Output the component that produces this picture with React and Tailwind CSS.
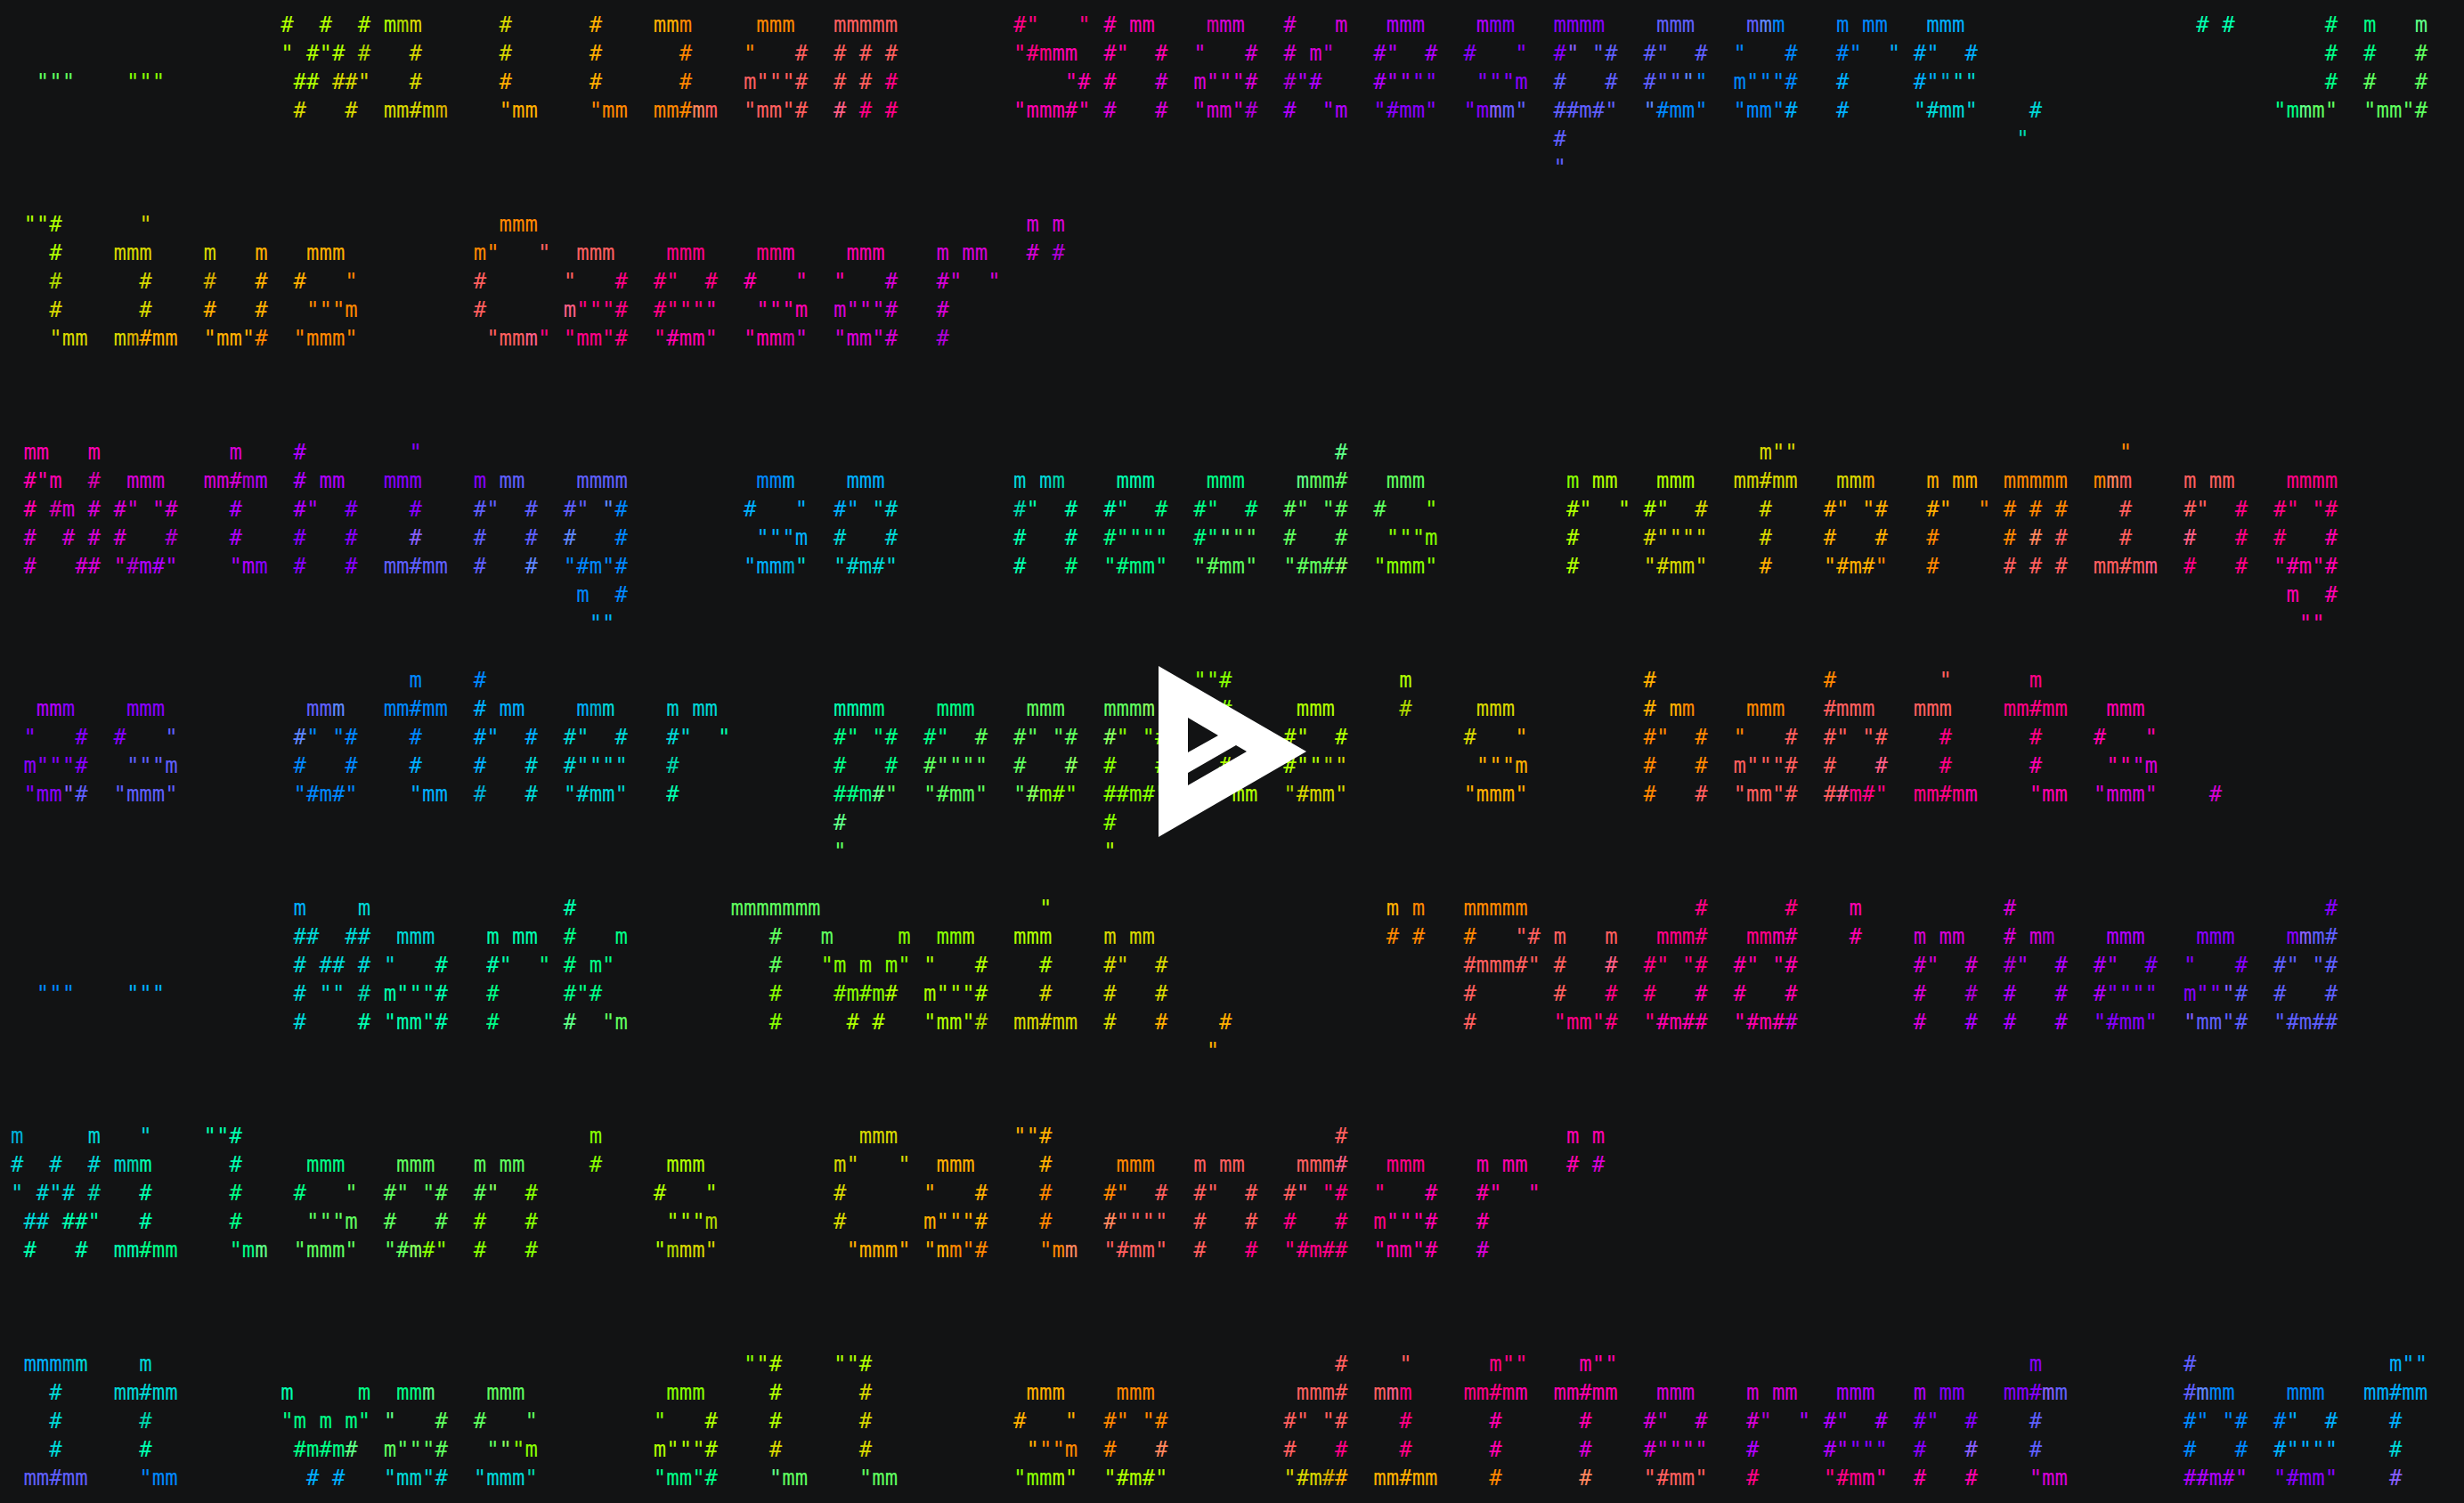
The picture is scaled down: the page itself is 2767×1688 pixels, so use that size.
const LINES = {
  0: `22:# 25:# 28:# 30:mmm 39:# 46:# 51:mmm 59:mmm 65:mmmmm 79:#" 84:" 86:# 88:mm 94:mmm 100:# 104:m 108:mmm 115:mmm 121:mmmm 129:mmm 136:mmm 143:m 145:mm 150:mmm 171:# 173:# 181:# 184:m 188:m`,
  1: `22:" 24:#"# 28:# 32:# 39:# 46:# 53:# 58:" 62:# 65:# 67:# 69:# 79:"#mmm 86:#" 90:# 93:" 97:# 100:# 102:m" 107:#" 111:# 114:# 118:" 121:#" 124:"# 128:#" 132:# 135:" 139:# 143:#" 147:" 149:#" 153:# 181:# 184:# 188:#`,
  2: `3:""" 10:""" 23:## 26:##" 32:# 39:# 46:# 53:# 58:m"""# 65:# 67:# 69:# 83:"# 86:# 90:# 93:m"""# 100:#"# 107:#"""" 115:"""m 121:# 125:# 128:#"""" 135:m"""# 143:# 149:#"""" 181:# 184:# 188:#`,
  3: `23:# 27:# 30:mm#mm 39:"mm 46:"mm 51:mm#mm 58:"mm"# 65:# 67:# 69:# 79:"mmm#" 86:# 90:# 93:"mm"# 100:# 103:"m 107:"#mm" 114:"mmm" 121:##m#" 128:"#mm" 135:"mm"# 143:# 149:"#mm" 158:# 177:"mmm" 184:"mm"#`,
  4: `121:# 157:"`,
  5: `121:"`,
  7: `2:""# 11:" 39:mmm 80:m 82:m`,
  8: `4:# 9:mmm 16:m 20:m 24:mmm 37:m" 42:" 45:mmm 52:mmm 59:mmm 66:mmm 73:m 75:mm 80:# 82:#`,
  9: `4:# 11:# 16:# 20:# 23:# 27:" 37:# 44:" 48:# 51:#" 55:# 58:# 62:" 65:" 69:# 73:#" 77:"`,
  10: `4:# 11:# 16:# 20:# 24:"""m 37:# 44:m"""# 51:#"""" 59:"""m 65:m"""# 73:#`,
  11: `4:"mm 9:mm#mm 16:"mm"# 23:"mmm" 38:"mmm" 44:"mm"# 51:"#mm" 58:"mmm" 65:"mm"# 73:#`,
  15: `2:mm 7:m 18:m 23:# 32:" 104:# 137:m"" 165:"`,
  16: `2:#"m 7:# 10:mmm 16:mm#mm 23:# 25:mm 30:mmm 37:m 39:mm 45:mmmm 59:mmm 66:mmm 79:m 81:mm 87:mmm 94:mmm 101:mmm# 108:mmm 122:m 124:mm 129:mmm 135:mm#mm 143:mmm 150:m 152:mm 156:mmmmm 163:mmm 170:m 172:mm 178:mmmm`,
  17: `2:# 4:#m 7:# 9:#" 12:"# 18:# 23:#" 27:# 32:# 37:#" 41:# 44:#" 47:"# 58:# 62:" 65:#" 68:"# 79:#" 83:# 86:#" 90:# 93:#" 97:# 100:#" 103:"# 107:# 111:" 122:#" 126:" 128:#" 132:# 137:# 142:#" 145:"# 150:#" 154:" 156:# 158:# 160:# 165:# 170:#" 174:# 177:#" 180:"#`,
  18: `2:# 5:# 7:# 9:# 13:# 18:# 23:# 27:# 32:# 37:# 41:# 44:# 48:# 59:"""m 65:# 69:# 79:# 83:# 86:#"""" 93:#"""" 100:# 104:# 108:"""m 122:# 128:#"""" 137:# 142:# 146:# 150:# 156:# 158:# 160:# 165:# 170:# 174:# 177:# 181:#`,
  19: `2:# 6:## 9:"#m#" 18:"mm 23:# 27:# 30:mm#mm 37:# 41:# 44:"#m"# 58:"mmm" 65:"#m#" 79:# 83:# 86:"#mm" 93:"#mm" 100:"#m## 107:"mmm" 122:# 128:"#mm" 137:# 142:"#m#" 150:# 156:# 158:# 160:# 163:mm#mm 170:# 174:# 177:"#m"#`,
  20: `45:m 48:# 178:m 181:#`,
  21: `46:"" 179:""`,
  23: `32:m 37:# 93:""# 109:m 128:# 142:# 151:" 158:m`,
  24: `3:mmm 10:mmm 24:mmm 30:mm#mm 37:# 39:mm 45:mmm 52:m 54:mm 65:mmmm 73:mmm 80:mmm 86:mmmm 95:# 101:mmm 109:# 115:mmm 128:# 130:mm 136:mmm 142:#mmm 149:mmm 156:mm#mm 164:mmm`,
  25: `2:" 6:# 9:# 13:" 23:#" 26:"# 32:# 37:#" 41:# 44:#" 48:# 52:#" 56:" 65:#" 68:"# 72:#" 76:# 79:#" 82:"# 86:#" 89:"# 95:# 100:#" 104:# 114:# 118:" 128:#" 132:# 135:" 139:# 142:#" 145:"# 151:# 158:# 163:# 167:"`,
  26: `2:m"""# 10:"""m 23:# 27:# 32:# 37:# 41:# 44:#"""" 52:# 65:# 69:# 72:#"""" 79:# 83:# 86:# 90:# 95:# 100:#"""" 115:"""m 128:# 132:# 135:m"""# 142:# 146:# 151:# 158:# 164:"""m`,
  27: `2:"mm"# 9:"mmm" 23:"#m#" 32:"mm 37:# 41:# 44:"#mm" 52:# 65:##m#" 72:"#mm" 79:"#m#" 86:##m#" 95:"mm 100:"#mm" 114:"mmm" 128:# 132:# 135:"mm"# 142:##m#" 149:mm#mm 158:"mm 163:"mmm" 172:#`,
  28: `65:# 86:#`,
  29: `65:" 86:"`,
  31: `23:m 28:m 44:# 57:mmmmmmm 81:" 108:m 110:m 114:mmmmm 132:# 139:# 144:m 156:# 181:#`,
  32: `23:## 27:## 31:mmm 38:m 40:mm 44:# 48:m 60:# 64:m 70:m 73:mmm 79:mmm 86:m 88:mm 108:# 110:# 114:# 118:"# 121:m 125:m 129:mmm# 136:mmm# 144:# 149:m 151:mm 156:# 158:mm 164:mmm 171:mmm 178:mmm#`,
  33: `23:# 25:## 28:# 30:" 34:# 38:#" 42:" 44:# 46:m" 60:# 64:"m 67:m 69:m" 72:" 76:# 81:# 86:#" 90:# 114:#mmm#" 121:# 125:# 128:#" 131:"# 135:#" 138:"# 149:#" 153:# 156:#" 160:# 163:#" 167:# 170:" 174:# 177:#" 180:"#`,
  34: `3:""" 10:""" 23:# 25:"" 28:# 30:m"""# 38:# 44:#"# 60:# 65:#m#m# 72:m"""# 81:# 86:# 90:# 114:# 121:# 125:# 128:# 132:# 135:# 139:# 149:# 153:# 156:# 160:# 163:#"""" 170:m"""# 177:# 181:#`,
  35: `23:# 28:# 30:"mm"# 38:# 44:# 47:"m 60:# 66:# 68:# 72:"mm"# 79:mm#mm 86:# 90:# 95:# 114:# 121:"mm"# 128:"#m## 135:"#m## 149:# 153:# 156:# 160:# 163:"#mm" 170:"mm"# 177:"#m##`,
  36: `94:"`,
  39: `1:m 7:m 11:" 16:""# 46:m 67:mmm 79:""# 104:# 122:m 124:m`,
  40: `1:# 4:# 7:# 9:mmm 18:# 24:mmm 31:mmm 37:m 39:mm 46:# 52:mmm 65:m" 70:" 73:mmm 81:# 87:mmm 93:m 95:mm 101:mmm# 108:mmm 115:m 117:mm 122:# 124:#`,
  41: `1:" 3:#"# 7:# 11:# 18:# 23:# 27:" 30:#" 33:"# 37:#" 41:# 51:# 55:" 65:# 72:" 76:# 81:# 86:#" 90:# 93:#" 97:# 100:#" 103:"# 107:" 111:# 115:#" 119:"`,
  42: `2:## 5:##" 11:# 18:# 24:"""m 30:# 34:# 37:# 41:# 52:"""m 65:# 72:m"""# 81:# 86:#"""" 93:# 97:# 100:# 104:# 107:m"""# 115:#`,
  43: `2:# 6:# 9:mm#mm 18:"mm 23:"mmm" 30:"#m#" 37:# 41:# 51:"mmm" 66:"mmm" 72:"mm"# 81:"mm 86:"#mm" 93:# 97:# 100:"#m## 107:"mm"# 115:#`,
  47: `2:mmmmm 11:m 58:""# 65:""# 104:# 109:" 116:m"" 123:m"" 158:m 170:# 186:m""`,
  48: `4:# 9:mm#mm 22:m 28:m 31:mmm 38:mmm 52:mmm 60:# 67:# 80:mmm 87:mmm 101:mmm# 107:mmm 114:mm#mm 121:mm#mm 129:mmm 136:m 138:mm 143:mmm 149:m 151:mm 156:mm#mm 170:#mmm 178:mmm 184:mm#mm`,
  49: `4:# 11:# 22:"m 25:m 27:m" 30:" 34:# 37:# 41:" 51:" 55:# 60:# 67:# 79:# 83:" 86:#" 89:"# 100:#" 103:"# 109:# 116:# 123:# 128:#" 132:# 136:#" 140:" 142:#" 146:# 149:#" 153:# 158:# 170:#" 173:"# 177:#" 181:# 186:#`,
  50: `4:# 11:# 23:#m#m# 30:m"""# 38:"""m 51:m"""# 60:# 67:# 80:"""m 86:# 90:# 100:# 104:# 109:# 116:# 123:# 128:#"""" 136:# 142:#"""" 149:# 153:# 158:# 170:# 174:# 177:#"""" 186:#`,
  51: `2:mm#mm 11:"mm 24:# 26:# 30:"mm"# 37:"mmm" 51:"mm"# 60:"mm 67:"mm 79:"mmm" 86:"#m#" 100:"#m## 107:mm#mm 116:# 123:# 128:"#mm" 136:# 142:"#mm" 149:# 153:# 158:"mm 170:##m#" 177:"#mm" 186:#`,
};

const ROW_COUNT = 52;
const CUBE = [0, 95, 135, 175, 215, 255];

// the output went through lolcat, every block starts on its own phase
function rowPhase(row) {
  if (row < 15) return -0.05;
  if (row < 47) return 1.25;
  if (row < 51) return 0.31;
  return -0.88;
}

function cubeLevel(angle) {
  const value = Math.sin(angle) * 127 + 128;
  return CUBE[Math.floor((6 * value) / 256)];
}

function charColor(col, row) {
  const t = Math.PI / 2 + (col - 67) / 30 + row * 0.1 + rowPhase(row);
  const r = cubeLevel(t);
  const g = cubeLevel(t + (2 * Math.PI) / 3);
  const b = cubeLevel(t + (4 * Math.PI) / 3);
  return `rgb(${r},${g},${b})`;
}

function parseLine(spec) {
  const cells = [];
  if (!spec) return cells;
  for (const part of spec.split(" ")) {
    const idx = part.indexOf(":");
    const start = Number(part.slice(0, idx));
    const text = part.slice(idx + 1);
    for (let i = 0; i < text.length; i++) cells[start + i] = text[i];
  }
  return cells;
}

function TerminalLine({ row }) {
  const cells = parseLine(LINES[row]);
  const out = [];
  for (let col = 0; col < cells.length; col++) {
    if (cells[col]) {
      out.push(
        <span key={col} style={{ color: charColor(col, row) }}>
          {cells[col]}
        </span>
      );
    } else {
      out.push(" ");
    }
  }
  return <div className="h-8 leading-8 whitespace-pre">{out}</div>;
}

function PlayLogo() {
  return (
    <svg viewBox="0 0 166 192" className="w-[166px] h-[192px]">
      <path
        fill="#ffffff"
        fillRule="evenodd"
        d="M0 0 L166 96 L0 192 Z M33 58 L67 78 L33 97 Z M33 120 L87 89 L99 96 L33 134 Z"
      />
    </svg>
  );
}

export default function App() {
  const rows = Array.from({ length: ROW_COUNT }, (_, i) => i);
  return (
    <div className="relative h-screen overflow-hidden bg-[#121314] pt-3 font-['DejaVu_Sans_Mono',monospace] text-[24px] tracking-[-0.02px]">
      <div className="-ml-[2.5px]">
        {rows.map((row) => (
          <TerminalLine key={row} row={row} />
        ))}
      </div>
      <div className="absolute inset-0 flex items-center justify-center">
        <PlayLogo />
      </div>
    </div>
  );
}
